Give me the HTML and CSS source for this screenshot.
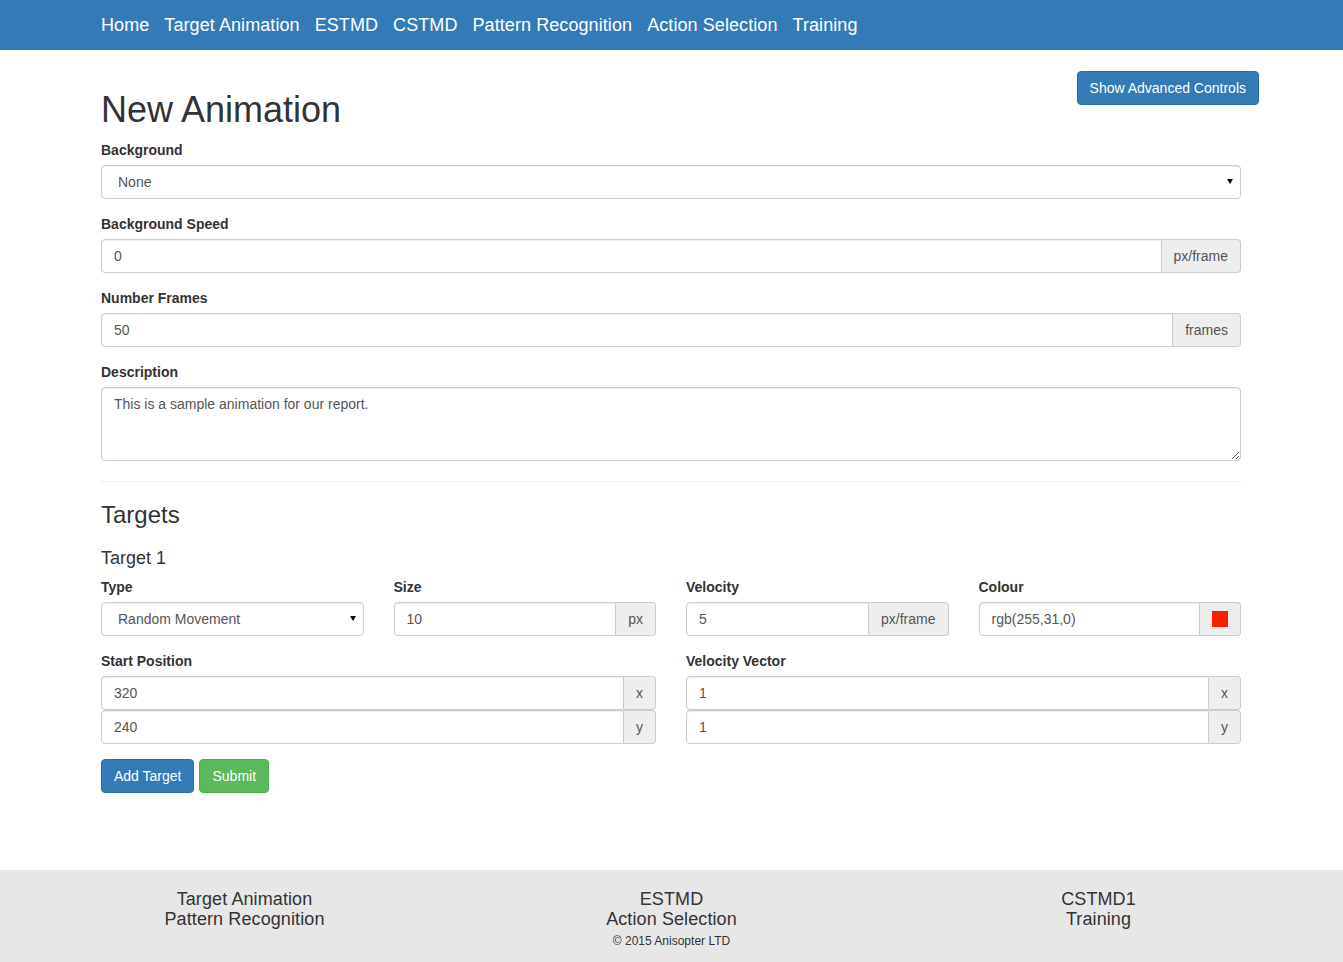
FILE: index.html
```html
<!DOCTYPE html>
<html lang="en">
<head>
<meta charset="utf-8">
<title>New Animation</title>
<link rel="stylesheet" href="styles.css">
</head>
<body>
<nav class="navbar">
  <div class="container nav-inner">
    <a href="#" class="nav-link">Home</a>
    <a href="#" class="nav-link">Target Animation</a>
    <a href="#" class="nav-link">ESTMD</a>
    <a href="#" class="nav-link">CSTMD</a>
    <a href="#" class="nav-link">Pattern Recognition</a>
    <a href="#" class="nav-link">Action Selection</a>
    <a href="#" class="nav-link">Training</a>
  </div>
</nav>

<main class="container">
  <div class="page-head">
    <h1 class="page-title">New Animation</h1>
    <button type="button" class="btn btn-primary btn-advanced">Show Advanced Controls</button>
  </div>

  <div class="form-group">
    <label class="control-label">Background</label>
    <div class="select-wrap">
      <select class="form-control select">
        <option>None</option>
      </select>
    </div>
  </div>

  <div class="form-group">
    <label class="control-label">Background Speed</label>
    <div class="input-group">
      <input class="form-control" type="text" value="0">
      <span class="addon">px/frame</span>
    </div>
  </div>

  <div class="form-group">
    <label class="control-label">Number Frames</label>
    <div class="input-group">
      <input class="form-control" type="text" value="50">
      <span class="addon">frames</span>
    </div>
  </div>

  <div class="form-group">
    <label class="control-label">Description</label>
    <textarea class="form-control textarea" rows="3">This is a sample animation for our report.</textarea>
  </div>

  <hr class="divider">

  <h3 class="section-title">Targets</h3>
  <h4 class="target-title">Target 1</h4>

  <div class="row row-4">
    <div class="form-group">
      <label class="control-label">Type</label>
      <div class="select-wrap">
        <select class="form-control select">
          <option>Random Movement</option>
        </select>
      </div>
    </div>
    <div class="form-group">
      <label class="control-label">Size</label>
      <div class="input-group">
        <input class="form-control" type="text" value="10">
        <span class="addon">px</span>
      </div>
    </div>
    <div class="form-group">
      <label class="control-label">Velocity</label>
      <div class="input-group">
        <input class="form-control" type="text" value="5">
        <span class="addon">px/frame</span>
      </div>
    </div>
    <div class="form-group">
      <label class="control-label">Colour</label>
      <div class="input-group">
        <input class="form-control" type="text" value="rgb(255,31,0)">
        <span class="addon addon-colour"><i class="swatch"></i></span>
      </div>
    </div>
  </div>

  <div class="row row-2">
    <div class="form-group">
      <label class="control-label">Start Position</label>
      <div class="input-group">
        <input class="form-control" type="text" value="320">
        <span class="addon addon-axis">x</span>
      </div>
      <div class="input-group">
        <input class="form-control" type="text" value="240">
        <span class="addon addon-axis">y</span>
      </div>
    </div>
    <div class="form-group">
      <label class="control-label">Velocity Vector</label>
      <div class="input-group">
        <input class="form-control" type="text" value="1">
        <span class="addon addon-axis">x</span>
      </div>
      <div class="input-group">
        <input class="form-control" type="text" value="1">
        <span class="addon addon-axis">y</span>
      </div>
    </div>
  </div>

  <div class="actions">
    <button type="button" class="btn btn-primary">Add Target</button>
    <button type="button" class="btn btn-success">Submit</button>
  </div>
</main>

<footer class="footer">
  <div class="footer-grid">
    <div class="footer-col">
      <div class="footer-link">Target Animation</div>
      <div class="footer-link">Pattern Recognition</div>
    </div>
    <div class="footer-col">
      <div class="footer-link">ESTMD</div>
      <div class="footer-link">Action Selection</div>
      <div class="copyright">© 2015 Anisopter LTD</div>
    </div>
    <div class="footer-col">
      <div class="footer-link">CSTMD1</div>
      <div class="footer-link">Training</div>
    </div>
  </div>
</footer>
</body>
</html>
```

FILE: styles.css
```css
* {
  box-sizing: border-box;
}

html, body {
  margin: 0;
  padding: 0;
}

body {
  font-family: "Liberation Sans", Arial, Helvetica, sans-serif;
  font-size: 14px;
  line-height: 1.42857143;
  color: #333;
  background: #fff;
}

.container {
  width: 1170px;
  margin-left: calc((100% - 1171px) / 2);
  margin-right: auto;
  padding: 0 15px;
}

/* Buttons */
.btn {
  display: inline-block;
  padding: 6px 12px;
  font-family: inherit;
  font-size: 14px;
  line-height: 1.42857143;
  font-weight: 400;
  text-align: center;
  white-space: nowrap;
  border: 1px solid transparent;
  border-radius: 4px;
  color: #fff;
  cursor: pointer;
  margin: 0;
}

.btn-primary {
  background-color: #337ab7;
  border-color: #2e6da4;
}

.btn-success {
  background-color: #5cb85c;
  border-color: #4cae4c;
}

/* Navbar */
.navbar {
  background: #337ab7;
  height: 50px;
  margin-bottom: 20px;
}

.nav-inner {
  display: flex;
  gap: 15px;
}

.nav-link {
  display: block;
  color: #fff;
  text-decoration: none;
  font-size: 18px;
  letter-spacing: 0.08px;
  line-height: 20px;
  padding: 15px 0;
}

/* Header */
.page-head {
  display: flex;
  justify-content: space-between;
  align-items: flex-start;
}

.page-title {
  font-size: 36px;
  font-weight: 500;
  line-height: 1.1;
  margin: 20px 0 10px;
}

.page-head .btn-advanced {
  margin-top: 1px;
  margin-right: -18px;
}

/* Forms */
.form-group {
  margin-bottom: 15px;
}

.control-label {
  display: inline-block;
  max-width: 100%;
  margin-bottom: 5px;
  font-weight: 700;
}

.form-control {
  display: block;
  width: 100%;
  height: 34px;
  padding: 6px 12px;
  font-family: inherit;
  font-size: 14px;
  line-height: 1.42857143;
  color: #555;
  background-color: #fff;
  border: 1px solid #ccc;
  border-radius: 4px;
  box-shadow: inset 0 1px 1px rgba(0, 0, 0, .075);
  margin: 0;
}

.select-wrap {
  position: relative;
}

.select {
  -webkit-appearance: none;
  appearance: none;
  padding-left: 16px;
  padding-right: 24px;
  color: #555;
}

.select-wrap::after {
  content: "";
  position: absolute;
  right: 8px;
  top: 14px;
  width: 0;
  height: 0;
  border-left: 3px solid transparent;
  border-right: 3px solid transparent;
  border-top: 5px solid #000;
  pointer-events: none;
}

.textarea {
  height: auto;
  resize: vertical;
}

.input-group {
  display: flex;
  width: 100%;
}

.input-group .form-control {
  flex: 1 1 auto;
  width: 1%;
  border-top-right-radius: 0;
  border-bottom-right-radius: 0;
}

.addon {
  display: flex;
  align-items: center;
  justify-content: center;
  padding: 6px 12px;
  font-size: 14px;
  line-height: 1;
  color: #555;
  background-color: #eee;
  border: 1px solid #ccc;
  border-left: 0;
  border-radius: 0 4px 4px 0;
  white-space: nowrap;
}

.swatch {
  display: block;
  width: 16px;
  height: 16px;
  background: rgb(255, 31, 0);
}

/* Section */
.divider {
  margin: 20px 0;
  border: 0;
  border-top: 1px solid #eee;
  height: 0;
}

.section-title {
  font-size: 24px;
  font-weight: 500;
  line-height: 1.1;
  margin: 20px 0 10px;
}

.target-title {
  font-size: 18px;
  font-weight: 500;
  line-height: 1.1;
  margin: 21px 0 8px;
}

.row {
  display: grid;
  column-gap: 30px;
}

.row-4 {
  grid-template-columns: repeat(4, 1fr);
}

.row-2 {
  grid-template-columns: repeat(2, 1fr);
}

.actions {
  display: flex;
  gap: 5px;
}

/* Footer */
.footer {
  margin-top: 77px;
  background: #e7e7e7;
  padding: 19px 31px 20px;
}

.footer-grid {
  display: grid;
  grid-template-columns: repeat(3, 1fr);
  text-align: center;
}

.footer-link {
  font-size: 18px;
  letter-spacing: 0.1px;
  line-height: 20px;
  color: #333;
}

.copyright {
  font-size: 12px;
  line-height: 17px;
  margin-top: 4px;
}
```
